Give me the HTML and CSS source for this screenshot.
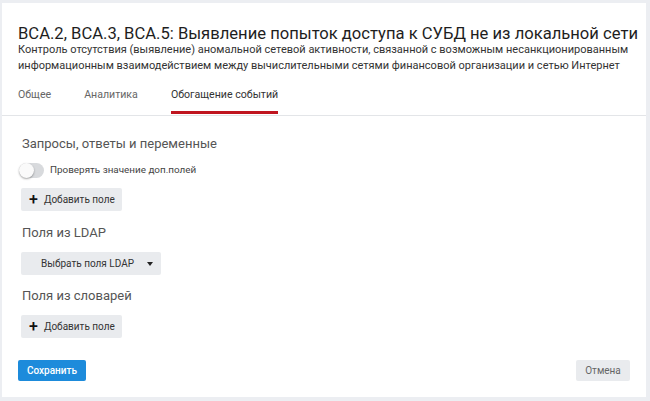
FILE: index.html
```html
<!DOCTYPE html>
<html lang="ru">
<head>
<meta charset="utf-8">
<link rel="stylesheet" href="styles.css">
</head>
<body>
<div class="card">
  <div class="header">
    <h1 class="title">ВСА.2, ВСА.3, ВСА.5: Выявление попыток доступа к СУБД не из локальной сети</h1>
    <p class="desc">Контроль отсутствия (выявление) аномальной сетевой активности, связанной с возможным несанкционированным информационным взаимодействием между вычислительными сетями финансовой организации и сетью Интернет</p>
    <div class="tabs">
      <span class="tab">Общее</span>
      <span class="tab">Аналитика</span>
      <span class="tab active">Обогащение событий</span>
    </div>
  </div>
  <div class="body">
    <h2 class="section">Запросы, ответы и переменные</h2>
    <label class="toggle-row"><span class="toggle"><span class="knob"></span></span><span class="toggle-label">Проверять значение доп.полей</span></label>
    <button class="btn btn-add"><span class="plus">+</span>Добавить поле</button>
    <h2 class="section">Поля из LDAP</h2>
    <button class="btn btn-select">Выбрать поля LDAP<span class="caret"></span></button>
    <h2 class="section">Поля из словарей</h2>
    <button class="btn btn-add"><span class="plus">+</span>Добавить поле</button>
  </div>
  <div class="footer">
    <button class="btn btn-primary">Сохранить</button>
    <button class="btn btn-cancel">Отмена</button>
  </div>
</div>
</body>
</html>
```

FILE: styles.css
```css
html, body {
  margin: 0;
  padding: 0;
}
body {
  background: #eceef2;
  font-family: Roboto, "Noto Sans", sans-serif;
  color: #222;
  padding: 3px 4px 4px 2px;
  height: 401px;
  box-sizing: border-box;
}
.card {
  background: #fff;
  height: 394px;
  display: flex;
  flex-direction: column;
}
.header {
  padding: 21px 8px 0 16px;
  border-bottom: 1px solid #e3e5e8;
}
.title {
  margin: 0;
  font-size: 16.6px;
  font-weight: 400;
  line-height: 20px;
  color: #1e1e1e;
  white-space: nowrap;
}
.desc {
  margin: -2px 0 0;
  font-size: 11px;
  line-height: 16px;
  color: #333;
}
.tabs {
  display: flex;
  margin-top: 14px;
  padding-bottom: 1px;
}
.tab {
  font-size: 10.6px;
  line-height: 14px;
  color: #666;
  padding: 0 0 9px;
  margin-right: 33px;
  border-bottom: 3px solid transparent;
}
.tab.active {
  color: #333;
  border-bottom-color: #c0151f;
}
.body {
  padding: 19px 19px 0;
  display: flex;
  flex-direction: column;
  align-items: flex-start;
}
.section {
  margin: 0;
  font-size: 13px;
  font-weight: 400;
  color: #555;
  line-height: 18px;
  padding-left: 1px;
}
.toggle-row {
  display: flex;
  align-items: center;
  margin-top: 10px;
}
.toggle {
  width: 25px;
  height: 15px;
  border-radius: 8px;
  background: #d8dadd;
  position: relative;
  display: inline-block;
  margin-left: -2px;
}
.knob {
  position: absolute;
  left: 0;
  top: 0;
  width: 15px;
  height: 15px;
  border-radius: 50%;
  background: #fafafa;
  box-shadow: 0 1px 2px rgba(0,0,0,.35);
}
.toggle-label {
  font-size: 9.9px;
  color: #444;
  margin-left: 6px;
  margin-top: -3px;
}
.btn {
  font-family: Roboto, "Noto Sans", sans-serif;
  border: none;
  border-radius: 2px;
  font-size: 10px;
  cursor: pointer;
  display: inline-flex;
  align-items: center;
}
.btn-add {
  background: #e9ebee;
  color: #333;
  height: 23px;
  width: 101px;
  padding: 0 0 0 8px;
  margin-top: 10px;
  margin-bottom: 13px;
}
.plus {
  font-size: 16px;
  font-weight: 500;
  color: #111;
  margin-right: 6px;
  line-height: 1;
}
.btn-select {
  background: #e9ebee;
  color: #333;
  height: 23px;
  width: 140px;
  padding: 0 0 0 20px;
  margin-top: 10px;
  margin-bottom: 12px;
  position: relative;
}
.caret {
  position: absolute;
  right: 8px;
  top: 10px;
  border-left: 3.5px solid transparent;
  border-right: 3.5px solid transparent;
  border-top: 4px solid #222;
}
.footer {
  margin-top: auto;
  padding: 0 16px 16px 16px;
  display: flex;
  justify-content: space-between;
}
.btn-primary {
  background: #1d8bdb;
  color: #fff;
  height: 21px;
  width: 68px;
  justify-content: center;
  font-weight: 500;
}
.btn-cancel {
  background: #e9ebee;
  color: #666;
  height: 21px;
  width: 54px;
  justify-content: center;
}
```
